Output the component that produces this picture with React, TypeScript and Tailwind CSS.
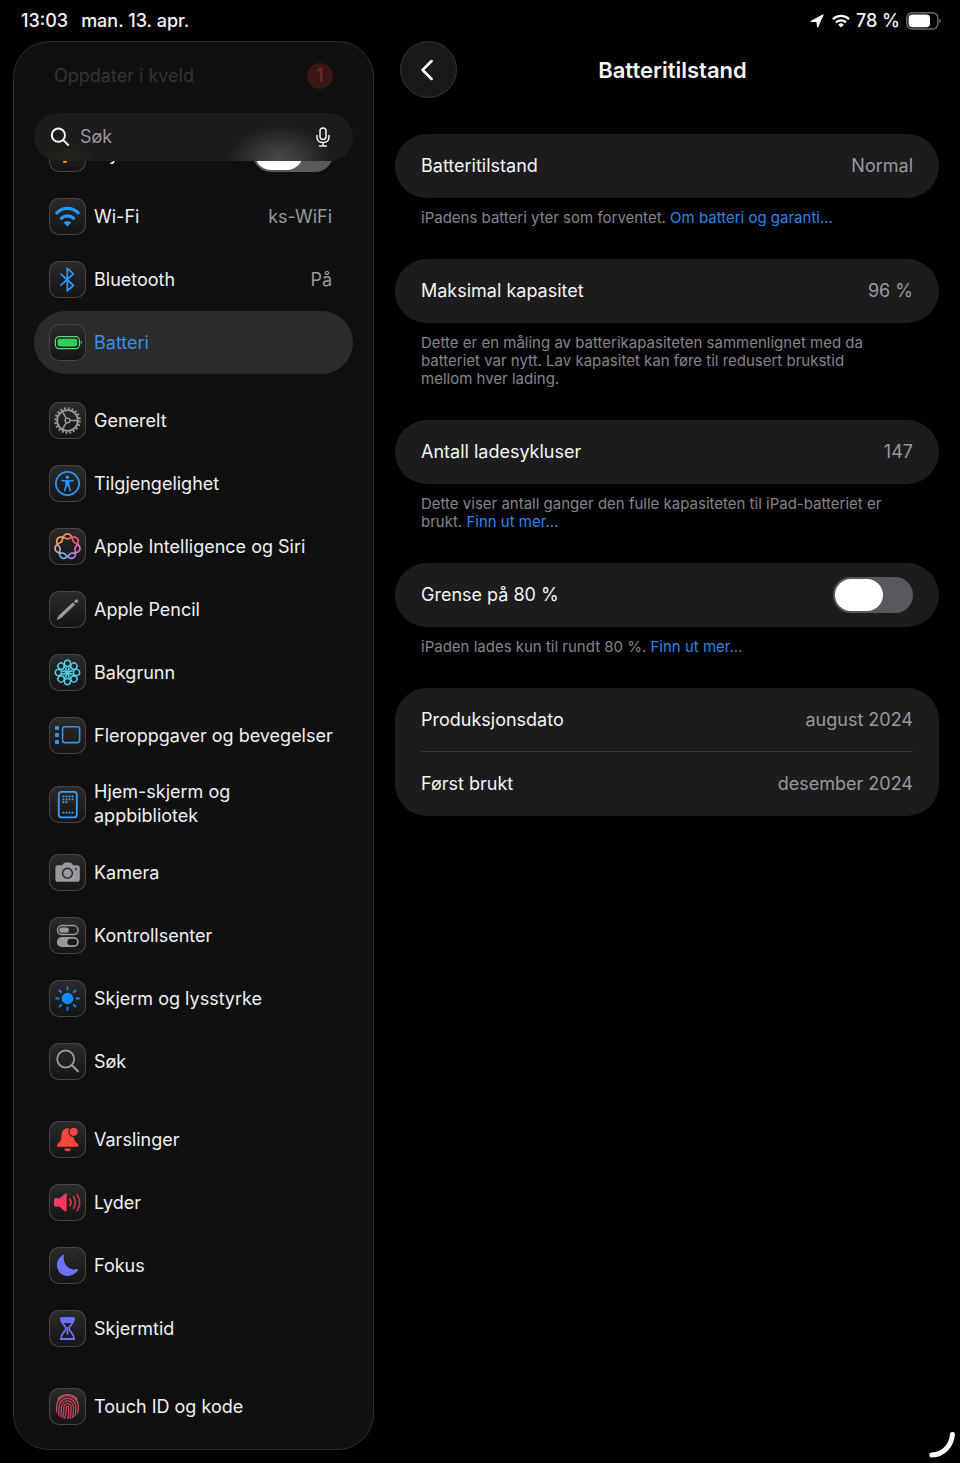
import React, { useState } from 'react';
import { FaPlane } from 'react-icons/fa';

const BLUE = '#2b95f2';
const GREY = '#98989d';

// Two strands swing around a ring and cross seven times, one colour per loop
const LOOP_COLORS = ['#f58a52', '#f0567c', '#e868c4', '#b184e6', '#62b4ea', '#c3a6b4', '#f6a455'];

function loopPath(loop: number) {
  const step = (Math.PI * 2) / 7;
  const strand = (side: number) => {
    const points: string[] = [];
    for (let i = 0; i <= 16; i++) {
      const offset = (i / 16 - 0.5) * step;
      const angle = loop * step + offset;
      const r = 10.2 + side * 2.5 * Math.cos(3.5 * offset);
      points.push(`${(18.5 + r * Math.sin(angle)).toFixed(2)} ${(18.5 - r * Math.cos(angle)).toFixed(2)}`);
    }
    return 'M' + points.join('L');
  };
  return strand(1) + strand(-1);
}

const TURNS = [0, 45, 90, 135, 180, 225, 270, 315];

const RIDGES = [1.2, 3.6, 6, 8.4, 10.8];

const icons: Record<string, React.ReactNode> = {
  wifi: (
    <g fill="none" stroke={BLUE} strokeWidth="3.2" strokeLinecap="round">
      <path d="M7.8 14.9A15 15 0 0 1 29.2 14.9" />
      <path d="M12.4 20.2A9 9 0 0 1 24.6 20.2" />
      <path d="M18.5 28.6L14.6 24.6A5.4 5.4 0 0 1 22.4 24.6Z" fill={BLUE} stroke="none" />
    </g>
  ),
  bluetooth: (
    <path d="M12 13.2L24.4 24.5L18.3 29.8V7.3L24.4 12.8L12 24.1" fill="none" stroke={BLUE} strokeWidth="1.8" strokeLinecap="round" strokeLinejoin="round" />
  ),
  battery: (
    <g fill="#30d158">
      <rect x="6.4" y="12.6" width="24" height="12" rx="3.8" fill="none" stroke="#5fd67c" strokeWidth="1.2" />
      <rect x="8.6" y="14.8" width="19.6" height="7.6" rx="1.8" />
      <path d="M31.7 16.6C33.3 17.3 33.3 19.9 31.7 20.6Z" />
    </g>
  ),
  gear: (
    <g fill="none" stroke={GREY}>
      <circle cx="18.5" cy="18.5" r="12.2" strokeWidth="2.2" strokeDasharray="1.9 1.93" />
      <circle cx="18.5" cy="18.5" r="10.4" strokeWidth="1.9" />
      <circle cx="18.5" cy="18.5" r="2.4" strokeWidth="1.4" />
      <path d="M21 18.5H28.5M17.3 16.3L13.4 9.7M17.3 20.7L13.4 27.3" strokeWidth="1.6" />
    </g>
  ),
  accessibility: (
    <g fill="none" stroke="#2b95f8" strokeLinecap="round" strokeLinejoin="round">
      <circle cx="18.5" cy="18.5" r="11.6" strokeWidth="1.8" />
      <circle cx="18.5" cy="12.2" r="1.7" fill="#2b95f8" stroke="none" />
      <path d="M13 15.4L17 16.1H20L24 15.4" strokeWidth="1.5" />
      <path d="M17.4 16.4H19.6V20L21.3 25.6M17.4 16.4V20L15.7 25.6" strokeWidth="1.6" />
      <path d="M17.4 16.4H19.6V20.4H17.4Z" fill="#2b95f8" strokeWidth="1" />
    </g>
  ),
  intelligence: (
    <g fill="none" strokeWidth="1.7" strokeLinecap="round">
      {LOOP_COLORS.map((color, i) => (
        <path key={color} d={loopPath(i)} stroke={color} />
      ))}
    </g>
  ),
  pencil: (
    <g fill={GREY}>
      <path d="M24 11.2L26.2 13.4L12.2 26.9L8.2 29L7.8 28.6L9.8 24.6Z" />
      <path d="M24.9 10.3L26.6 8.7C28 7.4 30.2 9.5 28.9 10.9L27.2 12.5Z" />
    </g>
  ),
  wallpaper: (
    <g fill="none" stroke="#4fd3ee" strokeWidth="1.4">
      {TURNS.map((turn) => (
        <g key={turn} transform={`rotate(${turn} 18.5 18.5)`}>
          <circle cx="18.5" cy="9.4" r="3.1" />
          <path d="M18.5 18.5L16.8 12M18.5 18.5L20.2 12" strokeWidth="1" />
        </g>
      ))}
    </g>
  ),
  multitasking: (
    <g fill="#2f94ea">
      <rect x="6" y="9" width="4" height="4" rx="0.8" />
      <rect x="6" y="16" width="4" height="4" rx="0.8" />
      <rect x="6" y="23" width="4" height="4" rx="0.8" />
      <rect x="13.6" y="9.8" width="17" height="15.8" rx="2" fill="none" stroke="#2f94ea" strokeWidth="1.6" />
    </g>
  ),
  home: (
    <g fill="#4aa9f5">
      <rect x="9.8" y="5.8" width="18" height="25.6" rx="2.6" fill="none" stroke="#3a9df0" strokeWidth="1.8" />
      <path d="M13.6 10.4H25M13.6 13.3H25M13.6 16.2H19M13.6 26.6H25" stroke="#4aa9f5" strokeWidth="1.7" strokeDasharray="1.7 1.3" />
    </g>
  ),
  camera: (
    <g fill={GREY}>
      <path d="M9 11.2H13.2L14.8 9.2Q15.4 8.5 16.2 8.5H21.2Q22 8.5 22.6 9.2L24.2 11.2H28.2Q30.8 11.2 30.8 13.8V25.2Q30.8 27.8 28.2 27.8H9Q6.4 27.8 6.4 25.2V13.8Q6.4 11.2 9 11.2Z" />
      <circle cx="18.5" cy="19.2" r="4.9" fill="none" stroke="#242424" strokeWidth="1.4" />
      <circle cx="27" cy="15" r="1.1" fill="#242424" />
    </g>
  ),
  control: (
    <g fill={GREY}>
      <rect x="8.5" y="8.6" width="20.6" height="9" rx="4.5" fill="none" stroke={GREY} strokeWidth="1.5" />
      <rect x="10.3" y="10.4" width="9.6" height="5.4" rx="2.7" />
      <rect x="7.8" y="19.9" width="22" height="10.2" rx="5.1" />
      <rect x="18.4" y="21.8" width="9.6" height="6.4" rx="3.2" fill="#1c1c1c" />
    </g>
  ),
  brightness: (
    <g>
      <circle cx="18.5" cy="18.5" r="5.8" fill="#1489fb" />
      {TURNS.map((turn) => (
        <path key={turn} d="M18.5 9.6V7.1" stroke="#1489fb" strokeWidth="1.8" strokeLinecap="round" transform={`rotate(${turn} 18.5 18.5)`} />
      ))}
    </g>
  ),
  search: (
    <g fill="none" stroke={GREY} strokeLinecap="round">
      <circle cx="16.7" cy="16" r="8.5" strokeWidth="1.8" />
      <path d="M22.9 22.2L28.8 28.1" strokeWidth="2.2" />
    </g>
  ),
  bell: (
    <g fill="#ff453f">
      <path d="M18.5 7.2C13.9 7.2 12.6 11 12.5 14.4C12.4 19.2 11.6 19.9 9 22.6C7.4 24.2 7.6 25.8 9.6 25.8H28C30 25.8 30.2 24.2 28.6 22.6C26 19.9 24.9 19.2 24.5 14.4C24.3 11 23.1 7.2 18.5 7.2Z" />
      <path d="M15.2 27.6H22C21.4 31.2 15.8 31.2 15.2 27.6Z" />
      <circle cx="24.6" cy="10.8" r="5.2" fill="#222222" />
      <circle cx="24.6" cy="10.8" r="4.1" />
    </g>
  ),
  sound: (
    <g fill="none" stroke="#f8365f" strokeWidth="1.6" strokeLinecap="round">
      <path d="M6.6 14.3H10.6L16 9.7Q17.6 8.7 17.6 10.4V26.6Q17.6 28.3 16 27.3L10.6 22.7H6.6Q5 22.7 5 21.1V15.9Q5 14.3 6.6 14.3Z" fill="#ff375f" stroke="none" />
      <path d="M20.9 15Q22.9 18.5 20.9 22" />
      <path d="M24.5 12.7Q28 18.5 24.5 24.3" stroke="#d53556" />
      <path d="M28.1 10.3Q33.2 18.5 28.1 26.7" stroke="#c0334f" />
    </g>
  ),
  moon: (
    <path d="M15 8.2C13.3 16.6 19.6 24.2 28.2 22.1Q29.6 21.8 28.9 23.1C24.7 30.8 13.2 31.1 9.2 23.4C6.3 17.7 8.6 11.2 14 8.1Q15.2 7.4 15 8.2Z" fill="#6f70ff" />
  ),
  hourglass: (
    <g fill="none" stroke="#6f70ff" strokeLinejoin="round">
      <path d="M12 8.2H25C25.2 13.6 20.2 15.4 20.2 18.5C20.2 21.6 25.2 23.4 25 28.8H12C11.8 23.4 16.8 21.6 16.8 18.5C16.8 15.4 11.8 13.6 12 8.2Z" strokeWidth="1.7" />
      <path d="M11.6 8H25.4L24.4 12.6H12.6Z" fill="#6f70ff" strokeWidth="1" />
      <path d="M18.5 17V24.4" strokeWidth="1.8" />
      <path d="M11.8 29.2H25.2" strokeWidth="1.8" strokeLinecap="round" />
    </g>
  ),
  touch: (
    <g fill="none" stroke="#cf4560" strokeWidth="1.3" clipPath="url(#fingertip)">
      <clipPath id="fingertip"><circle cx="18.5" cy="18.5" r="12.6" /></clipPath>
      <path d="M8.6 11.4A12 12 0 0 1 28.4 11.4" stroke="#e0607a" />
      {RIDGES.map((r) => (
        <path key={r} d={`M${16 - r * 0.9} 31Q${18.5 - r} 27 ${18.5 - r} ${19.5 - r * 0.1}A${r} ${r} 0 0 1 ${18.5 + r} ${19.5 - r * 0.1}Q${18.5 + r} 27 ${17.5 + r * 0.9} 31`} />
      ))}
    </g>
  ),
  flight: <FaPlane x="8" y="8" size={21} color="#ff9f0a" />,
};

type Item = { id: string; label: string; value?: string; active?: boolean };

const groups: Item[][] = [
  [
    { id: 'wifi', label: 'Wi-Fi', value: 'ks-WiFi' },
    { id: 'bluetooth', label: 'Bluetooth', value: 'På' },
    { id: 'battery', label: 'Batteri', active: true },
  ],
  [
    { id: 'gear', label: 'Generelt' },
    { id: 'accessibility', label: 'Tilgjengelighet' },
    { id: 'intelligence', label: 'Apple Intelligence og Siri' },
    { id: 'pencil', label: 'Apple Pencil' },
    { id: 'wallpaper', label: 'Bakgrunn' },
    { id: 'multitasking', label: 'Fleroppgaver og bevegelser' },
    { id: 'home', label: 'Hjem-skjerm og appbibliotek' },
    { id: 'camera', label: 'Kamera' },
    { id: 'control', label: 'Kontrollsenter' },
    { id: 'brightness', label: 'Skjerm og lysstyrke' },
    { id: 'search', label: 'Søk' },
  ],
  [
    { id: 'bell', label: 'Varslinger' },
    { id: 'sound', label: 'Lyder' },
    { id: 'moon', label: 'Fokus' },
    { id: 'hourglass', label: 'Skjermtid' },
  ],
  [{ id: 'touch', label: 'Touch ID og kode' }],
];

function Tile({ id }: { id: string }) {
  return (
    <span className="size-[37px] shrink-0 rounded-[10px] bg-linear-to-b from-[#2b2b2b] to-[#151515] shadow-[inset_0_0_0_1px_#464646]">
      <svg viewBox="0 0 37 37" className="size-full" aria-hidden="true">{icons[id]}</svg>
    </span>
  );
}

function Toggle({ id }: { id: string }) {
  const [on, setOn] = useState(false);
  return (
    <input
      id={id}
      type="checkbox"
      role="switch"
      checked={on}
      onChange={(e) => setOn(e.target.checked)}
      className="flex h-9 w-20 shrink-0 appearance-none items-center rounded-full bg-[#59595d] p-0.5 before:h-8 before:w-12 before:rounded-full before:bg-white before:content-[''] checked:justify-end checked:bg-[#30d158]"
    />
  );
}

function SidebarRow({ item }: { item: Item }) {
  return (
    <a
      href={`#${item.id}`}
      aria-current={item.active ? 'page' : undefined}
      className={`flex items-center gap-2 rounded-full py-[13px] pr-[21px] pl-[15px] ${item.active ? 'bg-[#2b2b2c] text-[#3a8fe6]' : 'text-[#f0f0f0]'}`}
    >
      <Tile id={item.id} />
      <span className={`min-w-0 ${item.id === 'home' ? 'max-w-[150px]' : 'whitespace-nowrap'}`}>{item.label}</span>
      {item.value && <span className="ml-auto text-[#98989a]">{item.value}</span>}
    </a>
  );
}

function Sidebar() {
  return (
    <aside className="relative w-[361px] shrink-0 overflow-hidden rounded-[36px] border border-[#2d2d2e] bg-[#101010] px-5 pt-0.5 text-lg leading-6">
      <nav className="flex flex-col gap-[15px]">
        <a href="#update" className="flex h-[63px] items-center justify-between px-5 text-[#343434]">
          Oppdater i kveld
          <span className="flex size-[26px] items-center justify-center rounded-full bg-[#3d1517] text-[#6c3032]">1</span>
        </a>
        <div>
          <div className="flex h-[63px] items-center gap-2 pr-5 pl-[15px] text-[#f0f0f0]">
            <Tile id="flight" />
            <label htmlFor="flight" className="mr-auto">Flymodus</label>
            <Toggle id="flight" />
          </div>
          {groups[0].map((item) => <SidebarRow key={item.id} item={item} />)}
        </div>
        {groups.slice(1).map((group, i) => (
          <div key={i}>
            {group.map((item) => <SidebarRow key={item.id} item={item} />)}
          </div>
        ))}
      </nav>

      {/* Search floats above the scrolled list */}
      <div className="absolute inset-x-5 top-[71px] z-10 flex h-12 items-center rounded-full bg-[#1c1c1c] bg-[radial-gradient(52px_36px_at_77%_100%,#4c4c4c,transparent),radial-gradient(30px_20px_at_11%_100%,#2a2418,transparent)] px-4">
        <svg viewBox="0 0 20 20" className="size-5 shrink-0" fill="none" stroke="#f2f2f2" strokeWidth="2" strokeLinecap="round" aria-hidden="true">
          <circle cx="8.4" cy="8.2" r="6.6" />
          <path d="M13.3 13.1L18.2 18" />
        </svg>
        <input type="search" aria-label="Søk" placeholder="Søk" className="ml-[10px] min-w-0 flex-1 bg-transparent text-white outline-none placeholder:text-[#98989a]" />
        <button type="button" aria-label="Dikter" className="mr-[6px]">
          <svg viewBox="0 0 16 20" className="h-5 w-4" fill="none" stroke="#f2f2f2" strokeWidth="1.5" strokeLinecap="round" aria-hidden="true">
            <rect x="5" y="1" width="6" height="11.6" rx="3" />
            <path d="M2 8.4V10C2 13.4 4.6 15.6 8 15.6S14 13.4 14 10V8.4M8 15.6V18.8M4.6 19H11.4" />
          </svg>
        </button>
      </div>
    </aside>
  );
}

function StatusBar() {
  return (
    <header className="flex h-[41px] shrink-0 items-center justify-between pr-[18px] pl-[21px] text-lg font-medium">
      <div className="flex gap-[13px]">
        <span>13:03</span>
        <span>man. 13. apr.</span>
      </div>
      <div className="flex items-center">
        <svg viewBox="0 0 14 14" className="mr-2 size-[14px]" fill="white" stroke="white" strokeWidth="1" strokeLinejoin="round" aria-hidden="true">
          <path d="M0.8 7.4L13.2 0.8L7.6 13.2L6.9 7.6Z" />
        </svg>
        <svg viewBox="0 0 18 14" className="mr-[6px] h-[14px] w-[18px]" fill="none" stroke="white" strokeWidth="2.3" aria-hidden="true">
          <path d="M0.9 5.2A11.6 11.6 0 0 1 17.1 5.2" />
          <path d="M4 8.4A7.2 7.2 0 0 1 14 8.4" />
          <path d="M9 13.6L6.2 10.7A4 4 0 0 1 11.8 10.7Z" fill="white" stroke="none" />
        </svg>
        <span>78 %</span>
        <svg viewBox="0 0 36 18" className="ml-[6px] h-[18px] w-9" aria-hidden="true">
          <rect x="0.8" y="0.8" width="31" height="16.2" rx="5.2" fill="none" stroke="#6b6b6b" strokeWidth="1.4" />
          <rect x="2.6" y="2.6" width="21.4" height="12.6" rx="3.6" fill="white" />
          <path d="M33.4 6.4C35.4 7.2 35.4 10.6 33.4 11.4Z" fill="#6b6b6b" />
        </svg>
      </div>
    </header>
  );
}

function Card({ children }: { children: React.ReactNode }) {
  return <div className="rounded-[32px] bg-[#1c1c1e] px-[26px] text-lg leading-6">{children}</div>;
}

function Row({ label, value }: { label: string; value: string }) {
  return (
    <div className="flex h-16 items-center justify-between">
      <span>{label}</span>
      <span className="text-[#98989f]">{value}</span>
    </div>
  );
}

function Note({ children, link }: { children: React.ReactNode; link?: string }) {
  return (
    <p className="pt-[11px] pr-11 pb-8 pl-[26px] text-[15px] leading-[18px] text-[#85858b]">
      {children}
      {link && <> <a href="#more" className="inline-block text-[#2b86f0]">{link}</a></>}
    </p>
  );
}

export default function App() {
  return (
    <div className="relative flex h-screen flex-col overflow-hidden bg-black pb-[13px] font-['Inter','Liberation_Sans',sans-serif] text-[#f5f5f5]">
      <StatusBar />
      <div className="flex min-h-0 flex-1 pl-[13px]">
        <Sidebar />
        <main className="min-w-0 flex-1 pr-[21px] pl-[21px]">
          <div className="-mr-[6px] mb-9 grid grid-cols-[57px_1fr_57px] items-center pl-[5px]">
            <button type="button" aria-label="Tilbake" className="flex size-[57px] items-center justify-center rounded-full border border-[#353535] bg-[#191919]">
              <svg viewBox="0 0 24 24" className="mr-1 size-6" fill="none" stroke="white" strokeWidth="2.5" strokeLinecap="round" strokeLinejoin="round" aria-hidden="true">
                <path d="M16.6 3L7.6 12L16.6 21" />
              </svg>
            </button>
            <h1 className="text-center text-[22px] leading-7 font-semibold">Batteritilstand</h1>
          </div>

          <Card><Row label="Batteritilstand" value="Normal" /></Card>
          <Note link="Om batteri og garanti…">iPadens batteri yter som forventet.</Note>

          <Card><Row label="Maksimal kapasitet" value="96 %" /></Card>
          <Note>Dette er en måling av batterikapasiteten sammenlignet med da batteriet var nytt. Lav kapasitet kan føre til redusert brukstid mellom hver lading.</Note>

          <Card><Row label="Antall ladesykluser" value="147" /></Card>
          <Note link="Finn ut mer…">Dette viser antall ganger den fulle kapasiteten til iPad-batteriet er brukt.</Note>

          <Card>
            <div className="flex h-16 items-center justify-between">
              <label htmlFor="limit">Grense på 80 %</label>
              <Toggle id="limit" />
            </div>
          </Card>
          <Note link="Finn ut mer…">iPaden lades kun til rundt 80 %.</Note>

          <Card>
            <div className="divide-y divide-[#39393c]">
              <Row label="Produksjonsdato" value="august 2024" />
              <Row label="Først brukt" value="desember 2024" />
            </div>
          </Card>
        </main>
      </div>

      {/* Corner handle */}
      <svg viewBox="0 0 28 28" className="absolute right-1 bottom-[5px] size-7" fill="none" stroke="white" strokeWidth="5" strokeLinecap="round" aria-hidden="true">
        <path d="M24.4 4.4C23.6 15.6 15.6 24.4 3.8 25" />
      </svg>
    </div>
  );
}
